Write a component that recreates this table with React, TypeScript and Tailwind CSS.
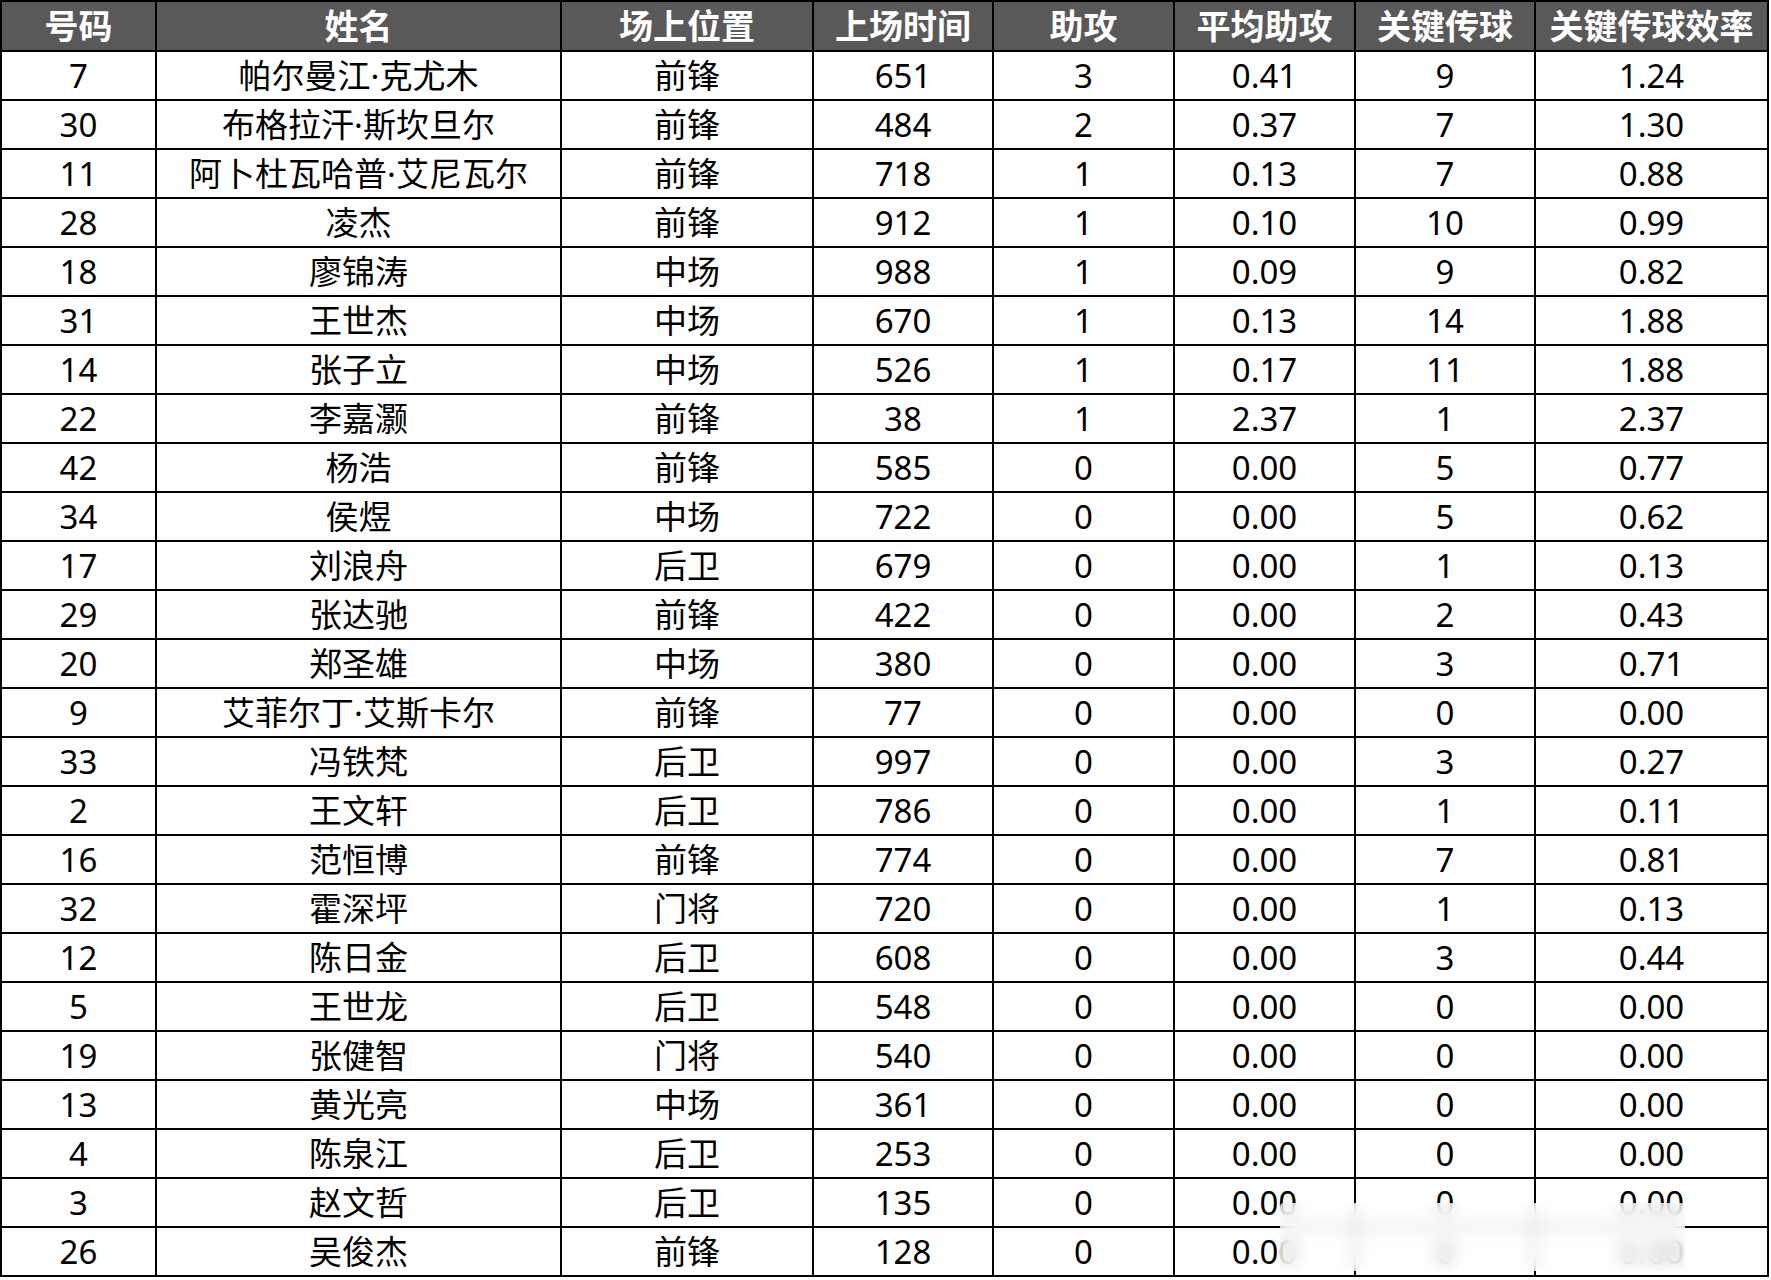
const headers = ["号码", "姓名", "场上位置", "上场时间", "助攻", "平均助攻", "关键传球", "关键传球效率"];

const rows: (string | number)[][] = [
  [7, "帕尔曼江·克尤木", "前锋", 651, 3, "0.41", 9, "1.24"],
  [30, "布格拉汗·斯坎旦尔", "前锋", 484, 2, "0.37", 7, "1.30"],
  [11, "阿卜杜瓦哈普·艾尼瓦尔", "前锋", 718, 1, "0.13", 7, "0.88"],
  [28, "凌杰", "前锋", 912, 1, "0.10", 10, "0.99"],
  [18, "廖锦涛", "中场", 988, 1, "0.09", 9, "0.82"],
  [31, "王世杰", "中场", 670, 1, "0.13", 14, "1.88"],
  [14, "张子立", "中场", 526, 1, "0.17", 11, "1.88"],
  [22, "李嘉灏", "前锋", 38, 1, "2.37", 1, "2.37"],
  [42, "杨浩", "前锋", 585, 0, "0.00", 5, "0.77"],
  [34, "侯煜", "中场", 722, 0, "0.00", 5, "0.62"],
  [17, "刘浪舟", "后卫", 679, 0, "0.00", 1, "0.13"],
  [29, "张达驰", "前锋", 422, 0, "0.00", 2, "0.43"],
  [20, "郑圣雄", "中场", 380, 0, "0.00", 3, "0.71"],
  [9, "艾菲尔丁·艾斯卡尔", "前锋", 77, 0, "0.00", 0, "0.00"],
  [33, "冯铁梵", "后卫", 997, 0, "0.00", 3, "0.27"],
  [2, "王文轩", "后卫", 786, 0, "0.00", 1, "0.11"],
  [16, "范恒博", "前锋", 774, 0, "0.00", 7, "0.81"],
  [32, "霍深坪", "门将", 720, 0, "0.00", 1, "0.13"],
  [12, "陈日金", "后卫", 608, 0, "0.00", 3, "0.44"],
  [5, "王世龙", "后卫", 548, 0, "0.00", 0, "0.00"],
  [19, "张健智", "门将", 540, 0, "0.00", 0, "0.00"],
  [13, "黄光亮", "中场", 361, 0, "0.00", 0, "0.00"],
  [4, "陈泉江", "后卫", 253, 0, "0.00", 0, "0.00"],
  [3, "赵文哲", "后卫", 135, 0, "0.00", 0, "0.00"],
  [26, "吴俊杰", "前锋", 128, 0, "0.00", 0, "0.00"],
];

export default function App() {
  return (
    <div className="relative w-[1771px] h-[1280px] overflow-hidden bg-white font-['Noto_Sans','Noto_Sans_CJK_SC',sans-serif]">
      <table className="table-fixed border-collapse w-[1767px]">
        <colgroup>
          <col className="w-[155px]" />
          <col className="w-[405px]" />
          <col className="w-[252px]" />
          <col className="w-[180px]" />
          <col className="w-[181px]" />
          <col className="w-[181px]" />
          <col className="w-[180px]" />
          <col className="w-[233px]" />
        </colgroup>
        <thead>
          <tr className="h-[50px] bg-[#595959]">
            {headers.map((h) => (
              <th
                key={h}
                className="border-2 border-black p-0 text-center align-middle text-[34px] font-bold leading-none text-white"
              >
                {h}
              </th>
            ))}
          </tr>
        </thead>
        <tbody>
          {rows.map((r, i) => (
            <tr key={i} className="h-[49px]">
              {r.map((c, j) => (
                <td
                  key={j}
                  className="border-2 border-black p-0 text-center align-middle text-[33px] leading-none text-black"
                >
                  {c}
                </td>
              ))}
            </tr>
          ))}
        </tbody>
      </table>

      {/* blurred watermark smudge over the bottom-right cells */}
      <div className="absolute left-[1280px] top-[1203px] w-[405px] h-[68px] bg-white/70 backdrop-blur-sm rounded-sm" />
    </div>
  );
}
